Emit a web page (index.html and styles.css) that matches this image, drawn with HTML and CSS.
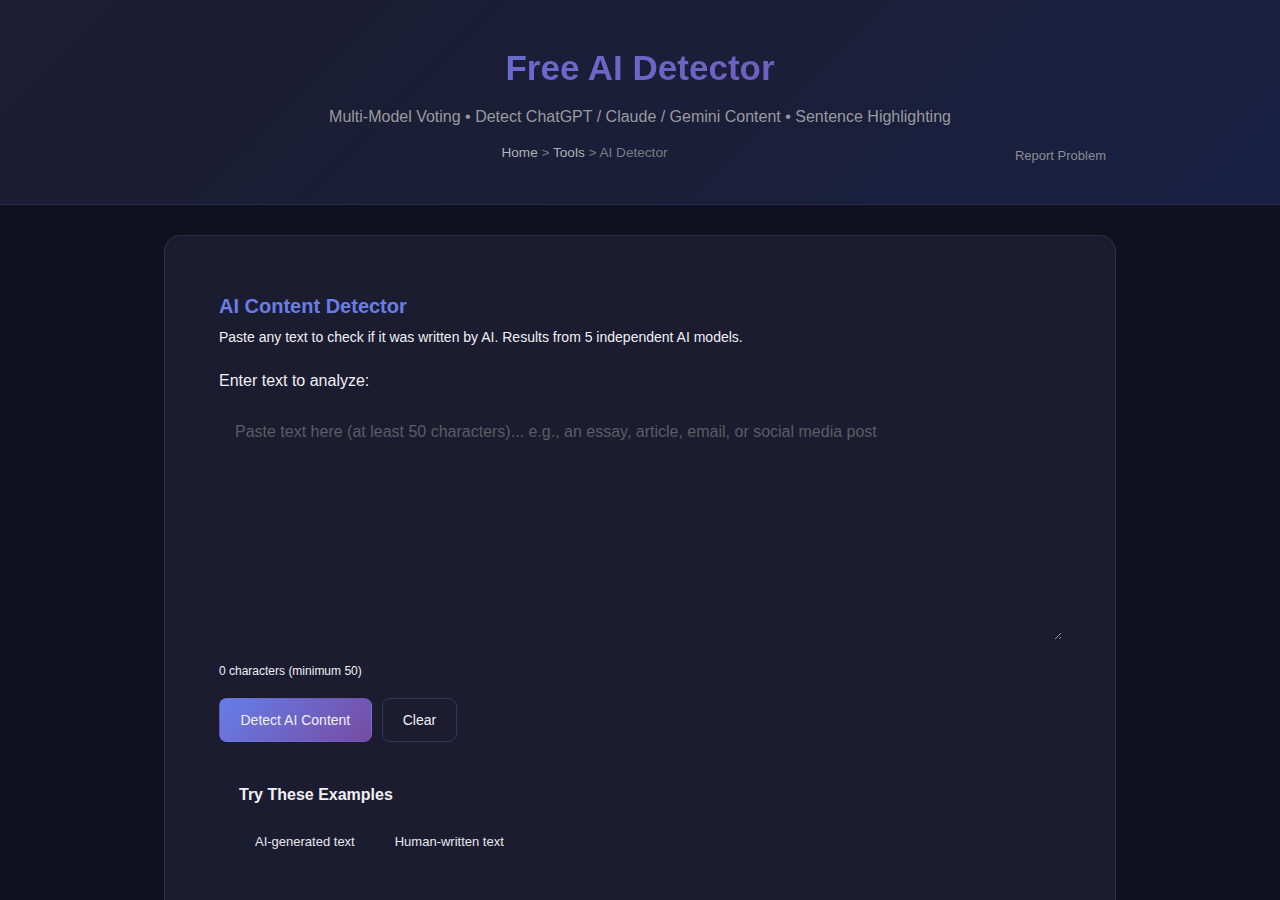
FILE: index.html
```html
<!DOCTYPE html>
<html lang="en">
<head>
    <meta charset="UTF-8">
    <meta name="viewport" content="width=device-width, initial-scale=1.0">
    <title>Free AI Detector</title>
    <link rel="stylesheet" href="styles.css">
</head>
<body>

    <header class="site-header">
        <h1 class="title">Free AI Detector</h1>
        <p class="subtitle">Multi-Model Voting • Detect ChatGPT / Claude / Gemini Content • Sentence Highlighting</p>
        <div class="header-row">
            <nav class="breadcrumb">
                <a href="#">Home</a> &gt; <a href="#">Tools</a> &gt; <span>AI Detector</span>
            </nav>
            <button class="report-btn">Report Problem</button>
        </div>
    </header>

    <main class="card">
        <h2 class="tool-title">AI Content Detector</h2>
        <p class="tool-desc">Paste any text to check if it was written by AI. Results from 5 independent AI models.</p>

        <label class="field-label" for="inputText">Enter text to analyze:</label>
        <textarea id="inputText" class="text-input" placeholder="Paste text here (at least 50 characters)... e.g., an essay, article, email, or social media post"></textarea>
        <div class="char-count"><span id="charCount">0</span> characters (minimum 50)</div>

        <div class="actions">
            <button class="btn btn-primary">Detect AI Content</button>
            <button class="btn btn-outline" onclick="clearText()">Clear</button>
        </div>

        <!-- Sample texts -->
        <section class="examples">
            <h3>Try These Examples</h3>
            <div class="example-list">
                <button class="example-btn">AI-generated text</button>
                <button class="example-btn">Human-written text</button>
            </div>
        </section>
    </main>

    <script>
        const input = document.getElementById('inputText');
        const count = document.getElementById('charCount');

        input.addEventListener('input', () => {
            count.textContent = input.value.length;
        });

        function clearText() {
            input.value = '';
            count.textContent = 0;
        }
    </script>
</body>
</html>
```

FILE: styles.css
```css
body {
    font-family: "Liberation Sans", Arial, sans-serif;
    margin: 0;
    padding: 0;
    background-color: #10111f;
    color: #e8e8f0;
}

/* Header */
.site-header {
    background: linear-gradient(135deg, #1d1d33 0%, #1b1e38 50%, #182042 100%);
    border-bottom: 1px solid #2c2e58;
    padding: 48px 0 36px;
    text-align: center;
}

.title {
    margin: 0 0 20px;
    font-size: 35px;
    font-weight: bold;
    background: linear-gradient(90deg, #667eea, #764ba2);
    -webkit-background-clip: text;
    background-clip: text;
    color: transparent;
}

.subtitle {
    margin: 0;
    font-size: 16px;
    color: #9a9a9e;
}

.header-row {
    width: 952px;
    margin: 19px auto 0;
    display: flex;
    align-items: flex-start;
}

.breadcrumb {
    flex: 1;
    font-size: 13.6px;
    color: #7c7c84;
    text-align: center;
}

.breadcrumb a {
    color: #b0b0b6;
    text-decoration: none;
}

.report-btn {
    background: none;
    border: none;
    padding: 3px 10px 5px;
    font-family: inherit;
    font-size: 13px;
    color: #8c8c92;
    cursor: pointer;
}

/* Card */
.card {
    width: 842px;
    margin: 30px auto 0;
    padding: 54px;
    background-color: #1b1c2f;
    border: 1px solid #2e2f4c;
    border-radius: 16px;
}

.tool-title {
    margin: 5px 0 11px;
    font-size: 20px;
    color: #6a7de6;
}

.tool-desc {
    margin: 0 0 27px;
    font-size: 14px;
    color: #f0f0f5;
}

.field-label {
    display: block;
    font-size: 16px;
    color: #f0f0f5;
    margin-bottom: 17px;
}

.text-input {
    display: block;
    box-sizing: border-box;
    width: calc(100% + 2px);
    height: 234px;
    padding: 15px;
    background-color: #1b1c2f;
    border: 1px solid #1c1d31;
    color: #e8e8f0;
    font-family: inherit;
    font-size: 16px;
    outline: none;
}

.text-input::placeholder {
    color: #5c5c66;
}

.char-count {
    margin-top: 23px;
    font-size: 12px;
    color: #f0f0f5;
}

.actions {
    display: flex;
    gap: 10px;
    margin-top: 20px;
}

.btn {
    padding: 13px 20px;
    font-family: inherit;
    font-size: 14px;
    border-radius: 8px;
    cursor: pointer;
    color: #f0f0f5;
}

.btn-primary {
    background: linear-gradient(135deg, #667eea 0%, #764ba2 100%);
    border: 1px solid transparent;
    padding: 13px 20.5px;
}

.btn-outline {
    background: transparent;
    border: 1px solid #34355a;
}

/* Examples */
.examples {
    margin-top: 24px;
    padding: 20px;
}

.examples h3 {
    margin: 0 0 22px;
    font-size: 16px;
    color: #f0f0f5;
}

.example-list {
    display: flex;
    gap: 8px;
}

.example-btn {
    background: transparent;
    border: none;
    padding: 8px 16px;
    font-family: inherit;
    font-size: 13px;
    color: #e8e8f0;
    cursor: pointer;
}
```
